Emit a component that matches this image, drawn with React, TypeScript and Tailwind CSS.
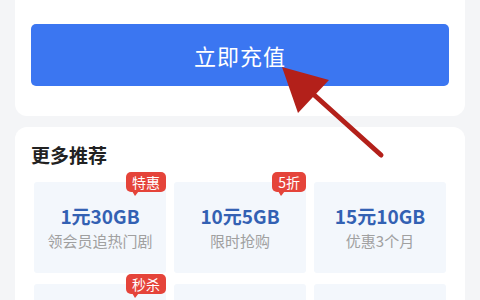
import React from "react";

const deals = [
  { title: "1元30GB", sub: "领会员追热门剧", tag: "特惠" },
  { title: "10元5GB", sub: "限时抢购", tag: "5折" },
  { title: "15元10GB", sub: "优惠3个月", tag: "" },
  { title: "", sub: "", tag: "秒杀" },
  { title: "", sub: "", tag: "" },
  { title: "", sub: "", tag: "" },
];

function Tag({ text }: { text: string }) {
  return (
    <div className="absolute -top-[10px] right-0">
      <div className="relative rounded-[5px] bg-[#e5443a] px-[6px] h-[20px] flex items-center text-[14px] leading-none text-white">
        {text}
        <span className="absolute left-[6px] -bottom-[4px] w-0 h-0 border-l-[3px] border-r-[4px] border-t-[5px] border-l-transparent border-r-transparent border-t-[#e5443a]" />
      </div>
    </div>
  );
}

export default function App() {
  return (
    <div
      className="relative w-[480px] h-[300px] overflow-hidden bg-[#f4f5f7] px-[15px]"
      style={{ fontFamily: '"Noto Sans CJK SC", "Noto Sans", sans-serif' }}
    >
      <div className="h-[116px] bg-white rounded-b-[12px] pt-[24px] px-[16px]">
        <button className="w-full h-[62px] rounded-[5px] bg-[#3b76f1] text-white text-[22px] tracking-[1px]">
          立即充值
        </button>
      </div>

      <div className="mt-[11px] bg-white rounded-[12px] pt-[15px] px-[19px] h-[200px]">
        <div className="-ml-[3px] text-[19px] leading-[26px] font-bold text-[#222]">更多推荐</div>
        <div className="mt-[14px] grid grid-cols-3 gap-x-[8px] gap-y-[11px]">
          {deals.map((d, i) => (
            <div key={i} className="relative h-[91px] bg-[#f3f7fc] rounded-[3px] flex flex-col items-center pt-[21px]">
              {d.tag && <Tag text={d.tag} />}
              {d.title && (
                <>
                  <div className="text-[19px] leading-[26px] font-semibold text-[#3361b3]">{d.title}</div>
                  <div className="mt-[2px] text-[15px] leading-[20px] text-[#a0a0a0]">{d.sub}</div>
                </>
              )}
            </div>
          ))}
        </div>
      </div>

      <svg className="absolute inset-0 pointer-events-none" width="480" height="300" viewBox="0 0 480 300">
        <line x1="302" y1="84" x2="381" y2="155" stroke="#b3201a" strokeWidth="5" strokeLinecap="round" />
        <polygon points="282,67 329,80 298,113" fill="#b3201a" />
      </svg>
    </div>
  );
}
